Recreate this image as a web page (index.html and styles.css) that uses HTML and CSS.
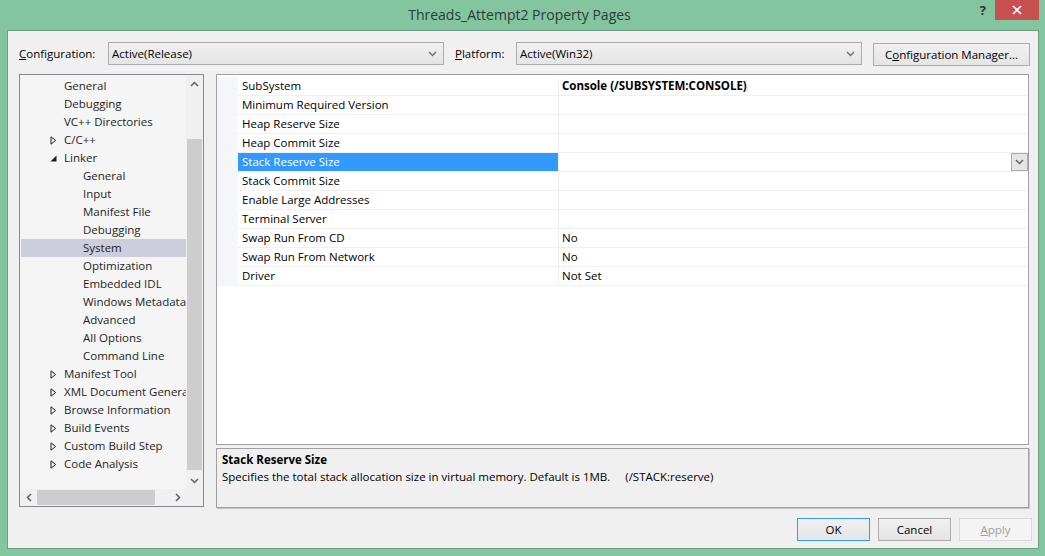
FILE: index.html
```html
<!DOCTYPE html>
<html>
<head>
<meta charset="utf-8">
<link rel="stylesheet" href="styles.css">
</head>
<body>
<div class="titlebar">
  <div></div>
  <div class="title">Threads_Attempt2 Property Pages</div>
  <div class="tb-right">
    <div class="help">?</div>
    <div class="close"><svg width="10" height="10" viewBox="0 0 10 10"><path d="M1 1 L9 9 M9 1 L1 9" stroke="#fff" stroke-width="1.6"/></svg></div>
  </div>
</div>
<div class="client">
  <div class="config-row">
    <div class="label lbl-config"><u>C</u>onfiguration:</div>
    <div class="combo combo-config"><span>Active(Release)</span><svg class="chev" width="9" height="6" viewBox="0 0 9 6"><path d="M1 1 L4.5 4.5 L8 1" fill="none" stroke="#707070" stroke-width="1.4"/></svg></div>
    <div class="label lbl-platform"><u>P</u>latform:</div>
    <div class="combo combo-platform"><span>Active(Win32)</span><svg class="chev" width="9" height="6" viewBox="0 0 9 6"><path d="M1 1 L4.5 4.5 L8 1" fill="none" stroke="#707070" stroke-width="1.4"/></svg></div>
    <div class="btn btn-cfgmgr">C<u>o</u>nfiguration Manager...</div>
  </div>
  <div class="main">
    <div class="tree">
      <div class="tree-content">
        <div class="trow l0"><span class="exp"></span>General</div>
        <div class="trow l0"><span class="exp"></span>Debugging</div>
        <div class="trow l0"><span class="exp"></span>VC++ Directories</div>
        <div class="trow l0"><span class="exp"><svg width="7" height="9" viewBox="0 0 7 9"><path d="M1 0.8 L5.6 4.5 L1 8.2 Z" fill="none" stroke="#1e1e1e" stroke-width="1"/></svg></span>C/C++</div>
        <div class="trow l0"><span class="exp"><svg width="7" height="9" viewBox="0 0 7 9"><path d="M0.5 7.5 L6.5 7.5 L6.5 1.5 Z" fill="#1e1e1e"/></svg></span>Linker</div>
        <div class="trow l1">General</div>
        <div class="trow l1">Input</div>
        <div class="trow l1">Manifest File</div>
        <div class="trow l1">Debugging</div>
        <div class="trow l1 sel">System</div>
        <div class="trow l1">Optimization</div>
        <div class="trow l1">Embedded IDL</div>
        <div class="trow l1">Windows Metadata</div>
        <div class="trow l1">Advanced</div>
        <div class="trow l1">All Options</div>
        <div class="trow l1">Command Line</div>
        <div class="trow l0"><span class="exp"><svg width="7" height="9" viewBox="0 0 7 9"><path d="M1 0.8 L5.6 4.5 L1 8.2 Z" fill="none" stroke="#1e1e1e" stroke-width="1"/></svg></span>Manifest Tool</div>
        <div class="trow l0"><span class="exp"><svg width="7" height="9" viewBox="0 0 7 9"><path d="M1 0.8 L5.6 4.5 L1 8.2 Z" fill="none" stroke="#1e1e1e" stroke-width="1"/></svg></span>XML Document Generator</div>
        <div class="trow l0"><span class="exp"><svg width="7" height="9" viewBox="0 0 7 9"><path d="M1 0.8 L5.6 4.5 L1 8.2 Z" fill="none" stroke="#1e1e1e" stroke-width="1"/></svg></span>Browse Information</div>
        <div class="trow l0"><span class="exp"><svg width="7" height="9" viewBox="0 0 7 9"><path d="M1 0.8 L5.6 4.5 L1 8.2 Z" fill="none" stroke="#1e1e1e" stroke-width="1"/></svg></span>Build Events</div>
        <div class="trow l0"><span class="exp"><svg width="7" height="9" viewBox="0 0 7 9"><path d="M1 0.8 L5.6 4.5 L1 8.2 Z" fill="none" stroke="#1e1e1e" stroke-width="1"/></svg></span>Custom Build Step</div>
        <div class="trow l0"><span class="exp"><svg width="7" height="9" viewBox="0 0 7 9"><path d="M1 0.8 L5.6 4.5 L1 8.2 Z" fill="none" stroke="#1e1e1e" stroke-width="1"/></svg></span>Code Analysis</div>
      </div>
      <div class="vscroll">
        <div class="sarrow"><svg width="9" height="6" viewBox="0 0 9 6"><path d="M1 5 L4.5 1.5 L8 5" fill="none" stroke="#606060" stroke-width="1.5"/></svg></div>
        <div class="vtrack-top"></div>
        <div class="vthumb"></div>
        <div class="vtrack-bot"></div>
        <div class="sarrow"><svg width="9" height="6" viewBox="0 0 9 6"><path d="M1 1 L4.5 4.5 L8 1" fill="none" stroke="#606060" stroke-width="1.5"/></svg></div>
      </div>
      <div class="hscroll">
        <div class="harrow"><svg width="6" height="9" viewBox="0 0 6 9"><path d="M5 1 L1.5 4.5 L5 8" fill="none" stroke="#606060" stroke-width="1.5"/></svg></div>
        <div class="hthumb"></div>
        <div class="htrack"></div>
        <div class="harrow"><svg width="6" height="9" viewBox="0 0 6 9"><path d="M1 1 L4.5 4.5 L1 8" fill="none" stroke="#606060" stroke-width="1.5"/></svg></div>
      </div>
      <div class="corner"></div>
    </div>
    <div class="right">
      <div class="grid">
        <div class="prow"><div class="gut"></div><div class="pname">SubSystem</div><div class="pval bold">Console (/SUBSYSTEM:CONSOLE)</div></div>
        <div class="prow"><div class="gut"></div><div class="pname">Minimum Required Version</div><div class="pval"></div></div>
        <div class="prow"><div class="gut"></div><div class="pname">Heap Reserve Size</div><div class="pval"></div></div>
        <div class="prow"><div class="gut"></div><div class="pname">Heap Commit Size</div><div class="pval"></div></div>
        <div class="prow"><div class="gut"></div><div class="pname psel">Stack Reserve Size</div><div class="pval"><div class="ddbtn"><svg width="9" height="6" viewBox="0 0 9 6"><path d="M1 1 L4.5 4.5 L8 1" fill="none" stroke="#606060" stroke-width="1.4"/></svg></div></div></div>
        <div class="prow"><div class="gut"></div><div class="pname">Stack Commit Size</div><div class="pval"></div></div>
        <div class="prow"><div class="gut"></div><div class="pname">Enable Large Addresses</div><div class="pval"></div></div>
        <div class="prow"><div class="gut"></div><div class="pname">Terminal Server</div><div class="pval"></div></div>
        <div class="prow"><div class="gut"></div><div class="pname">Swap Run From CD</div><div class="pval">No</div></div>
        <div class="prow"><div class="gut"></div><div class="pname">Swap Run From Network</div><div class="pval">No</div></div>
        <div class="prow"><div class="gut"></div><div class="pname">Driver</div><div class="pval">Not Set</div></div>
      </div>
      <div class="desc">
        <div class="desc-title">Stack Reserve Size</div>
        <div class="desc-text">Specifies the total stack allocation size in virtual memory. Default is 1MB.&nbsp;&nbsp;&nbsp;&nbsp; (/STACK:reserve)</div>
      </div>
    </div>
  </div>
  <div class="buttons">
    <div class="btn dlg default">OK</div>
    <div class="btn dlg">Cancel</div>
    <div class="btn dlg disabled"><u>A</u>pply</div>
  </div>
</div>
</body>
</html>
```
FILE: styles.css
```css
* { box-sizing: border-box; }
html, body { margin: 0; padding: 0; }
body {
  width: 1045px;
  height: 556px;
  background: #83c59f;
  font-family: "Open Sans", "Noto Sans", sans-serif;
  font-size: 11.5px;
  color: #000;
  overflow: hidden;
}
.titlebar {
  height: 30px;
  display: grid;
  grid-template-columns: 1fr auto 1fr;
  padding-right: 6px;
}
.title {
  font-size: 14px;
  color: #2e3a33;
  line-height: 30px;
  padding-top: 0px;
}
.tb-right {
  display: flex;
  justify-content: flex-end;
  align-items: flex-start;
}
.help {
  font-weight: bold;
  font-size: 13px;
  color: #333;
  line-height: 20px;
  margin-right: 9px;
}
.close {
  width: 44px;
  height: 20px;
  background: #c75050;
  display: flex;
  align-items: center;
  justify-content: center;
}
.client {
  margin: 0 6px 7px 7px;
  height: 519px;
  border: 1px solid #6f9f83;
  background: #f0f0f0;
  display: flex;
  flex-direction: column;
}
.config-row {
  margin-top: 11px;
  padding-left: 11px;
  height: 23px;
  display: flex;
  align-items: center;
}
.label { line-height: 23px; }
.lbl-config { width: 89px; }
.lbl-platform { width: 61px; margin-left: 11px; }
.combo {
  height: 23px;
  border: 1px solid #acacac;
  background: linear-gradient(#f0f0f0, #e5e5e5);
  display: flex;
  align-items: center;
  padding: 0 6px 0 3px;
}
.combo span { flex: 1; }
.combo-config { width: 336px; }
.combo-platform { width: 346px; }
.btn {
  border: 1px solid #acacac;
  background: linear-gradient(#f0f0f0, #e5e5e5);
  display: flex;
  align-items: center;
  justify-content: center;
}
.btn-cfgmgr {
  width: 157px;
  height: 23px;
  margin-left: 11px;
  margin-top: 1px;
}
.main {
  margin-top: 9px;
  padding-left: 11px;
  display: flex;
  height: 434px;
}
.tree {
  width: 185px;
  height: 433px;
  border: 1px solid #828790;
  background: #f5f5f5;
  display: grid;
  grid-template-columns: 166px 17px;
  grid-template-rows: 414px 17px;
}
.tree-content {
  padding-top: 2px;
  overflow: hidden;
  color: #1e1e1e;
}
.trow {
  height: 18px;
  line-height: 18px;
  white-space: nowrap;
  overflow: hidden;
  display: flex;
  align-items: center;
}
.trow.l0 { padding-left: 29px; }
.trow.l1 { padding-left: 63px; }
.trow.sel { background: #cccedb; margin-left: 1px; padding-left: 62px; }
.exp {
  width: 15px;
  flex: none;
  display: flex;
  align-items: center;
  padding-left: 1px;
}
.vscroll {
  background: #f0f0f0;
  display: flex;
  flex-direction: column;
}
.sarrow {
  height: 17px;
  display: flex;
  align-items: center;
  justify-content: center;
}
.vtrack-top { height: 47px; }
.vthumb { height: 331px; background: #cdcdcd; margin: 0 1px; }
.vtrack-bot { flex: 1; }
.hscroll {
  background: #f0f0f0;
  display: flex;
  align-items: stretch;
}
.harrow {
  width: 17px;
  display: flex;
  align-items: center;
  justify-content: center;
}
.hthumb { width: 118px; background: #cdcdcd; margin: 1px 0; }
.htrack { flex: 1; }
.corner { background: #f0f0f0; }
.right {
  margin-left: 12px;
  width: 813px;
  display: flex;
  flex-direction: column;
}
.grid {
  height: 371px;
  border: 1px solid #a0a0a0;
  background: #fff;
  padding-top: 2px;
}
.prow {
  display: flex;
  height: 19px;
}
.gut { width: 21px; background: #f5f6f9; }
.pname {
  width: 320px;
  padding-left: 4px;
  line-height: 18px;
  border-bottom: 1px solid #f0f0f0;
  white-space: nowrap;
}
.pname.psel { background: #3399ff; color: #fff; }
.pval {
  flex: 1;
  border-left: 1px solid #f0f0f0;
  border-bottom: 1px solid #f0f0f0;
  padding-left: 3px;
  line-height: 18px;
  display: flex;
  justify-content: space-between;
}
.bold { font-weight: bold; }
.ddbtn {
  margin-left: auto;
  width: 17px;
  height: 18px;
  border: 1px solid #acacac;
  background: #e5e5e5;
  display: flex;
  align-items: center;
  justify-content: center;
}
.desc {
  margin-top: 3px;
  height: 60px;
  border: 1px solid #a0a0a0;
  box-shadow: 1px 1px 0 #c4c4c4;
  background: #f0f0f0;
  padding: 2px 5px;
  line-height: 17px;
}
.desc-title { font-weight: bold; }
.buttons {
  margin-top: 10px;
  display: flex;
  justify-content: flex-end;
  gap: 8px;
  padding-right: 6px;
}
.btn.dlg { width: 73px; height: 23px; }
.btn.default { border-color: #3399ff; }
.btn.disabled { border-color: #d9d9d9; background: #f4f4f4; color: #a0a0a0; }
```
